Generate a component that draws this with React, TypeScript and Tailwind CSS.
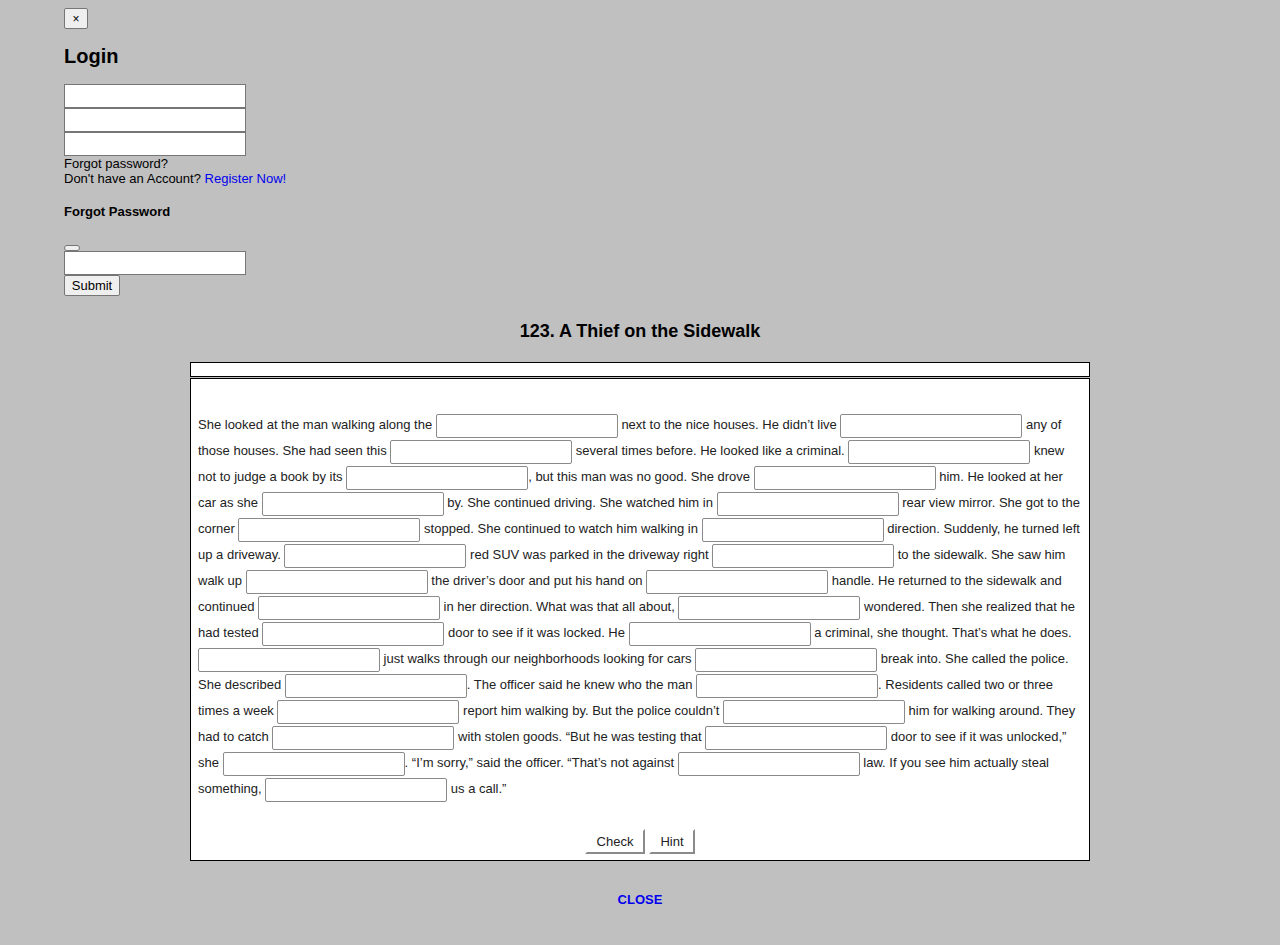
const STORY =
  "She looked at the man walking along the | next to the nice houses. He didn’t live | any of those houses. She had seen this | several times before. He looked like a criminal. | knew not to judge a book by its |, but this man was no good. She drove | him. He looked at her car as she | by. She continued driving. She watched him in | rear view mirror. She got to the corner | stopped. She continued to watch him walking in | direction. Suddenly, he turned left up a driveway. | red SUV was parked in the driveway right | to the sidewalk. She saw him walk up | the driver’s door and put his hand on | handle. He returned to the sidewalk and continued | in her direction. What was that all about, | wondered. Then she realized that he had tested | door to see if it was locked. He | a criminal, she thought. That’s what he does. | just walks through our neighborhoods looking for cars | break into. She called the police. She described |. The officer said he knew who the man |. Residents called two or three times a week | report him walking by. But the police couldn’t | him for walking around. They had to catch | with stolen goods. “But he was testing that | door to see if it was unlocked,” she |. “I’m sorry,” said the officer. “That’s not against | law. If you see him actually steal something, | us a call.”";

const parts = STORY.split("|");

const loginInput = "block h-6 w-[182px] border border-[#767676] bg-white";

export default function App() {
  return (
    <div className="min-h-[945px] bg-[#c0c0c0] font-['Liberation_Sans',Arial,sans-serif] text-[13px] text-black">
      <div className="px-16 pt-2">
        <button className="flex h-[21px] w-6 items-center justify-center rounded-[2px] border border-[#767676] bg-[#efefef] text-[12px]">
          ×
        </button>
        <h3 className="mt-[15px] text-[20px] font-bold leading-6">Login</h3>
        <div className="mt-4">
          <input className={loginInput} />
          <input className={loginInput} />
          <input className={loginInput} />
        </div>
        <p className="leading-[15px]">Forgot password?</p>
        <p className="leading-[15px]">
          Don't have an Account? <a className="text-[#0000ee]">Register Now!</a>
        </p>
        <h4 className="mt-[18px] font-bold leading-[15px]">Forgot Password</h4>
        <button className="mt-[26px] block h-[6px] w-4 rounded-[3px] border border-[#767676] bg-[#efefef]" />
        <input className={loginInput} />
        <button className="flex h-[21px] w-[56px] items-center justify-center rounded-[2px] border border-[#767676] bg-[#efefef] text-[13px]">
          Submit
        </button>
      </div>

      <h2 className="mt-[23px] text-center text-[18px] font-bold leading-6">
        123. A Thief on the Sidewalk
      </h2>

      <div className="mx-auto mt-[19px] w-[900px]">
        <div className="h-[15px] border border-black bg-white" />
        <div className="mt-px border border-black bg-white px-[7px] pb-[6px] pt-[33px]">
          <p className="leading-[26px] text-[#222]">
            {parts.map((t, i) => (
              <span key={i}>
                {t}
                {i < parts.length - 1 && (
                  <input className="h-6 w-[182px] rounded-[2px] border border-[#8a8a8a] bg-white align-middle" />
                )}
              </span>
            ))}
          </p>
          <div className="mt-[27px] flex justify-center gap-1">
            <button className="h-[25px] w-[60px] border-2 border-t-white border-l-white border-r-[#8a8a8a] border-b-[#8a8a8a] bg-white text-[13px] text-[#222]">
              Check
            </button>
            <button className="h-[25px] w-[46px] border-2 border-t-white border-l-white border-r-[#8a8a8a] border-b-[#8a8a8a] bg-white text-[13px] text-[#222]">
              Hint
            </button>
          </div>
        </div>
      </div>

      <p className="mt-[29px] text-center font-bold text-[#0000ee]">CLOSE</p>
    </div>
  );
}
